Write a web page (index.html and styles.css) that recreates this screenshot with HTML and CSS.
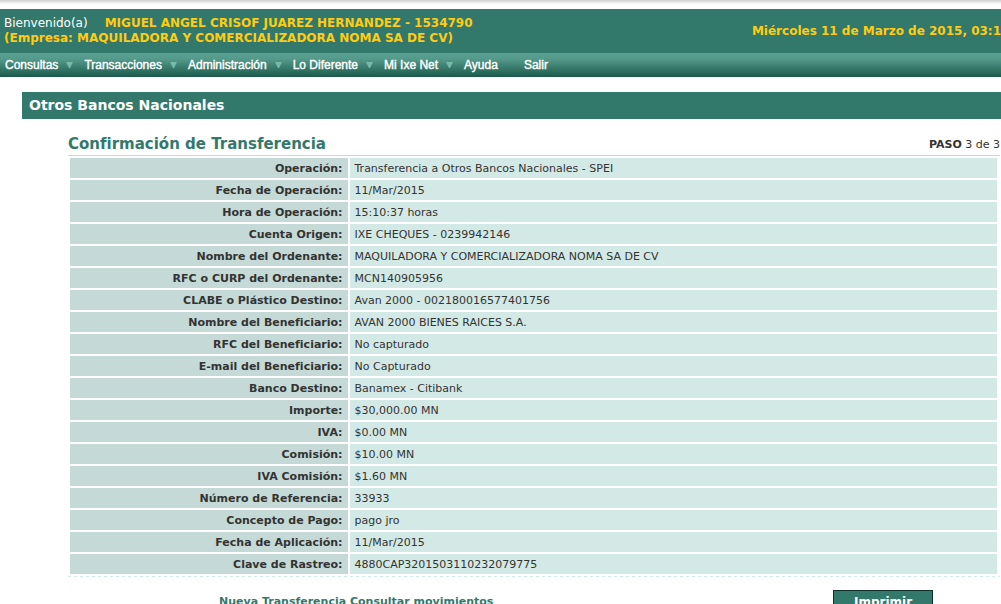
FILE: index.html
```html
<!DOCTYPE html>
<html lang="es">
<head>
<meta charset="utf-8">
<title>Confirmación de Transferencia</title>
<link rel="stylesheet" href="styles.css">
</head>
<body>
<header class="banner">
  <div class="user">
    <div><span class="welcome">Bienvenido(a)</span><span class="name">MIGUEL ANGEL CRISOF JUAREZ HERNANDEZ - 1534790</span></div>
    <div>(Empresa: MAQUILADORA Y COMERCIALIZADORA NOMA SA DE CV)</div>
  </div>
  <div class="date">Miércoles 11 de Marzo de 2015, 03:1</div>
</header>
<nav class="menu">
  <a class="item" href="#">Consultas<svg class="arrow" viewBox="0 0 7 6"><path d="M0 0h7L4 6H3z"/></svg></a>
  <a class="item" href="#">Transacciones<svg class="arrow" viewBox="0 0 7 6"><path d="M0 0h7L4 6H3z"/></svg></a>
  <a class="item" href="#">Administración<svg class="arrow" viewBox="0 0 7 6"><path d="M0 0h7L4 6H3z"/></svg></a>
  <a class="item" href="#">Lo Diferente<svg class="arrow" viewBox="0 0 7 6"><path d="M0 0h7L4 6H3z"/></svg></a>
  <a class="item" href="#">Mi Ixe Net<svg class="arrow" viewBox="0 0 7 6"><path d="M0 0h7L4 6H3z"/></svg></a>
  <a class="item plain" href="#">Ayuda</a>
  <a class="item plain" href="#">Salir</a>
</nav>
<h1 class="section">Otros Bancos Nacionales</h1>
<main class="content">
  <div class="heading">
    <h2 class="title">Confirmación de Transferencia</h2>
    <div class="step"><b>PASO</b> 3 de 3</div>
  </div>
  <table class="details">
    <tbody>
      <tr><th scope="row">Operación:</th><td>Transferencia a Otros Bancos Nacionales - SPEI</td></tr>
      <tr><th scope="row">Fecha de Operación:</th><td>11/Mar/2015</td></tr>
      <tr><th scope="row">Hora de Operación:</th><td>15:10:37 horas</td></tr>
      <tr><th scope="row">Cuenta Origen:</th><td>IXE CHEQUES - 0239942146</td></tr>
      <tr><th scope="row">Nombre del Ordenante:</th><td>MAQUILADORA Y COMERCIALIZADORA NOMA SA DE CV</td></tr>
      <tr><th scope="row">RFC o CURP del Ordenante:</th><td>MCN140905956</td></tr>
      <tr><th scope="row">CLABE o Plástico Destino:</th><td>Avan 2000 - 002180016577401756</td></tr>
      <tr><th scope="row">Nombre del Beneficiario:</th><td>AVAN 2000 BIENES RAICES S.A.</td></tr>
      <tr><th scope="row">RFC del Beneficiario:</th><td>No capturado</td></tr>
      <tr><th scope="row">E-mail del Beneficiario:</th><td>No Capturado</td></tr>
      <tr><th scope="row">Banco Destino:</th><td>Banamex - Citibank</td></tr>
      <tr><th scope="row">Importe:</th><td>$30,000.00 MN</td></tr>
      <tr><th scope="row">IVA:</th><td>$0.00 MN</td></tr>
      <tr><th scope="row">Comisión:</th><td>$10.00 MN</td></tr>
      <tr><th scope="row">IVA Comisión:</th><td>$1.60 MN</td></tr>
      <tr><th scope="row">Número de Referencia:</th><td>33933</td></tr>
      <tr><th scope="row">Concepto de Pago:</th><td>pago jro</td></tr>
      <tr><th scope="row">Fecha de Aplicación:</th><td>11/Mar/2015</td></tr>
      <tr><th scope="row">Clave de Rastreo:</th><td>4880CAP3201503110232079775</td></tr>
    </tbody>
  </table>
  <div class="actions">
    <div class="links"><a href="#">Nueva Transferencia</a> <a href="#">Consultar movimientos</a></div>
    <button class="print" type="button">Imprimir</button>
  </div>
</main>
</body>
</html>
```

FILE: styles.css
```css
* {
  box-sizing: border-box;
}

html {
  overflow: hidden;
}

body {
  margin: 0;
  background: #fff linear-gradient(#d2d2d2, #d8d8d8 1px, #f4f4f4 3px, #fff 5px) no-repeat;
  padding-top: 9px;
  color: #333;
  font-family: Verdana, "DejaVu Sans", sans-serif;
  font-size: 11px;
}

.banner {
  display: flex;
  justify-content: space-between;
  align-items: center;
  height: 44px;
  padding-left: 4px;
  background: #33796b;
  color: #fc1;
  font-size: 12px;
  font-weight: bold;
  line-height: 15px;
  white-space: nowrap;
  overflow: hidden;
}

.welcome {
  margin-right: 17px;
  color: #fff;
  font-weight: normal;
}

.menu {
  display: flex;
  height: 24px;
  padding-left: 5px;
  background: linear-gradient(#5aa193, #549a8b 25%, #1b5a4a);
}

.item {
  display: flex;
  align-items: center;
  gap: 8px;
  margin-right: 11px;
  color: #fff;
  font-family: "Liberation Sans", Arial, sans-serif;
  font-size: 12px;
  -webkit-text-stroke: 0.4px #fff;
  text-decoration: none;
}

.plain {
  margin-right: 26px;
}

.arrow {
  width: 7px;
  height: 6px;
  fill: #74bba9;
}

.section {
  margin: 15px 0 0 22px;
  padding-left: 7px;
  background: #33796b;
  color: #fff;
  font-size: 14px;
  line-height: 27px;
}

.content {
  margin: 16px 1px 0 68px;
}

.heading {
  display: flex;
  justify-content: space-between;
  align-items: center;
  height: 21px;
  padding-bottom: 2px;
  border-bottom: 1px solid #c5dad6;
}

.title {
  margin: 0;
  color: #33796b;
  font-size: 15px;
}

.details {
  width: calc(100% - 1px);
  border-collapse: separate;
  border-spacing: 2px;
  table-layout: fixed;
}

.details th,
.details td {
  height: 20px;
  padding: 1px 5px 0;
  line-height: 19px;
}

.details th {
  width: 30%;
  background: #c5dad6;
  text-align: right;
}

.details td {
  background: #d3e9e5;
}

.actions {
  display: flex;
  align-items: flex-start;
  justify-content: space-between;
  padding: 14px 67px 0 151px;
  background: repeating-linear-gradient(90deg, #d3e9e5 0 3px, #fff 3px 6px) 0 0 / 100% 1px no-repeat;
}

.links {
  padding-top: 4px;
  font-weight: bold;
  line-height: 16px;
}

.links a {
  color: #33796b;
  text-decoration: none;
}

.print {
  width: 100px;
  height: 24px;
  padding: 0;
  border: 1px solid #12302a;
  background: #33796b;
  color: #fff;
  font-family: inherit;
  font-size: 12px;
  font-weight: bold;
}
```
